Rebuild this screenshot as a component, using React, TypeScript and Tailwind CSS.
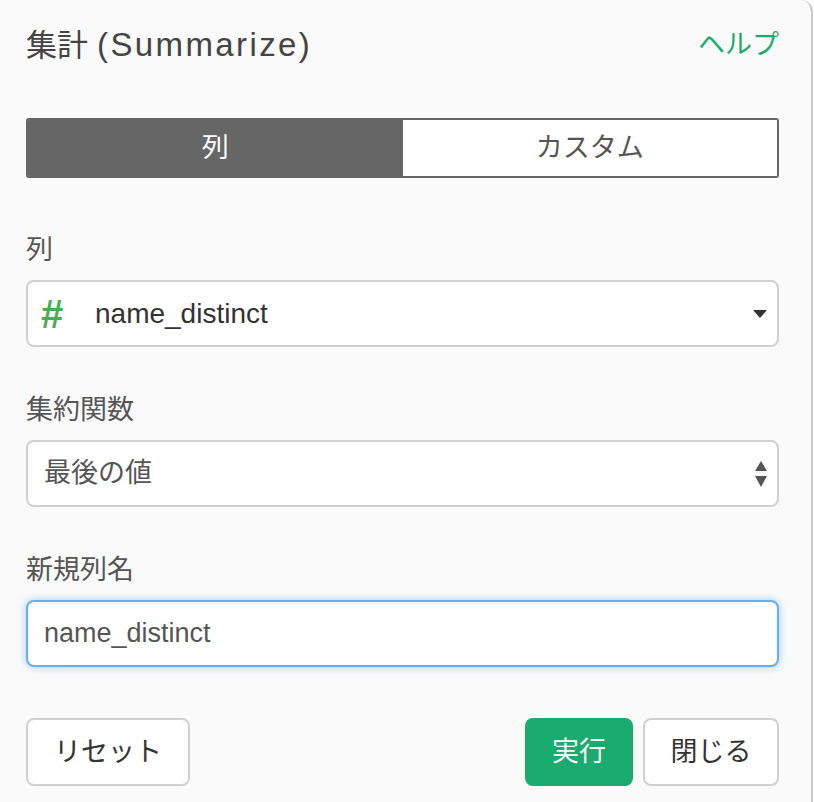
import React, { useState } from 'react';

const font = { fontFamily: '"Liberation Sans", "Noto Sans CJK JP", sans-serif' };

// Little caret for the column picker
const Caret: React.FC = () => (
  <svg width="14" height="8" viewBox="0 0 14 8">
    <path d="M0 0 L14 0 L7 8 Z" fill="#333" />
  </svg>
);

// Up/down arrows of a native select
const UpDown: React.FC = () => (
  <svg width="12" height="26" viewBox="0 0 12 26">
    <path d="M6 0 L12 10 L0 10 Z" fill="#555" />
    <path d="M0 15 L12 15 L6 26 Z" fill="#555" />
  </svg>
);

const Label: React.FC<{ children: React.ReactNode; className?: string }> = ({ children, className }) => (
  <div className={`h-[36px] leading-[36px] text-[27px] text-[#555] mb-[12px] ${className ?? ''}`}>{children}</div>
);

const App: React.FC = () => {
  const [tab, setTab] = useState<'col' | 'custom'>('col');
  const [name, setName] = useState('name_distinct');

  return (
    <div style={font} className="w-[813px] h-[802px] bg-[#fafafa] border-r-2 border-[#c8c8c8] rounded-tr-[12px] pl-[26px] pr-[32px]">
      {/* Header */}
      <div className="h-[90px] flex items-center justify-between">
        <h1 className="text-[31px] text-[#444] flex items-baseline">
          <span>集計</span>
          <span className="ml-[9px] text-[33px] tracking-[2.4px]">(Summarize)</span>
        </h1>
        <a className="text-[27px] text-[#1aab6f] cursor-pointer">ヘルプ</a>
      </div>

      {/* Tabs */}
      <div className="mt-[28px] h-[60px] grid grid-cols-2 border-2 border-[#666] rounded-[3px] overflow-hidden">
        <button
          onClick={() => setTab('col')}
          className={`text-[27px] ${tab === 'col' ? 'bg-[#666] text-white' : 'bg-white text-[#555]'}`}
        >
          列
        </button>
        <button
          onClick={() => setTab('custom')}
          className={`text-[27px] ${tab === 'custom' ? 'bg-[#666] text-white' : 'bg-white text-[#555]'}`}
        >
          カスタム
        </button>
      </div>

      {/* Column */}
      <Label className="mt-[54px]">列</Label>
      <div className="h-[67px] bg-white border-2 border-[#d0d0d0] rounded-[8px] flex items-center pl-[13px] pr-[10px]">
        <span className="text-[40px] font-bold text-[#4caa4f] w-[54px] leading-none">#</span>
        <span className="text-[28px] text-[#333] flex-1">name_distinct</span>
        <Caret />
      </div>

      {/* Aggregate function */}
      <Label className="mt-[45px]">集約関数</Label>
      <div className="h-[67px] bg-white border-2 border-[#d0d0d0] rounded-[8px] flex items-center pl-[16px] pr-[10px]">
        <span className="text-[27px] text-[#555] flex-1">最後の値</span>
        <UpDown />
      </div>

      {/* New column name */}
      <Label className="mt-[45px]">新規列名</Label>
      <input
        value={name}
        onChange={(e) => setName(e.target.value)}
        style={font}
        className="w-full h-[67px] bg-white border-2 border-[#66afe9] rounded-[8px] px-[16px] text-[27px] text-[#555] outline-none shadow-[0_0_8px_rgba(102,175,233,0.6)]"
      />

      {/* Footer buttons */}
      <div className="mt-[51px] flex items-center">
        <button className="w-[164px] h-[68px] bg-white border-2 border-[#d0d0d0] rounded-[8px] text-[27px] text-[#333]">
          リセット
        </button>
        <div className="flex-1" />
        <button className="w-[108px] h-[68px] bg-[#1aab6f] rounded-[8px] text-[27px] text-white">実行</button>
        <button className="ml-[10px] w-[136px] h-[68px] bg-white border-2 border-[#d0d0d0] rounded-[8px] text-[27px] text-[#333]">
          閉じる
        </button>
      </div>
    </div>
  );
};

export default App;
